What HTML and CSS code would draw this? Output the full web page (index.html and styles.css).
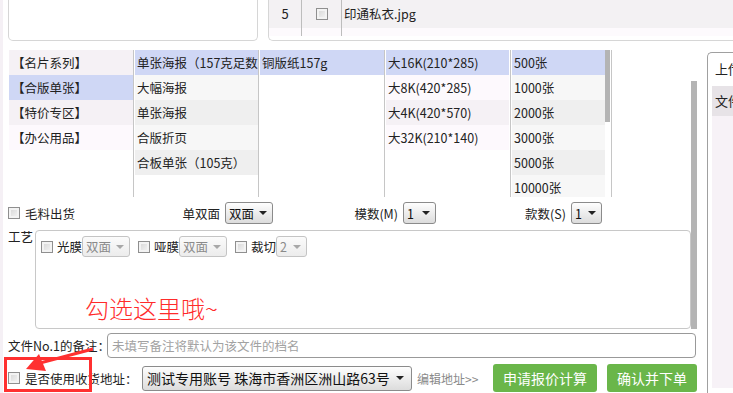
FILE: index.html
```html
<!DOCTYPE html>
<html lang="zh-CN">
<head>
<meta charset="utf-8">
<title>在线下单</title>
<link rel="stylesheet" href="styles.css">
</head>
<body>
<div class="page">
  <div class="top">
    <div class="top-left"></div>
    <div class="top-right">
      <div class="file-row">
        <div class="c-no">5</div>
        <div class="c-chk"><input type="checkbox" class="cb"></div>
        <div class="c-name">印通私衣.jpg</div>
      </div>
      <div class="file-row file-row-empty">
        <div class="c-no"></div>
        <div class="c-chk"></div>
        <div class="c-name"></div>
      </div>
    </div>
  </div>

  <div class="content">
    <div class="main">
      <div class="upper">
        <div class="upper-inner">
          <div class="lists">
            <ul class="list l1">
              <li class="p2">【名片系列】</li>
              <li class="on">【合版单张】</li>
              <li class="p2">【特价专区】</li>
              <li class="p1">【办公用品】</li>
            </ul>
            <ul class="list l2">
              <li class="on">单张海报（157克足数）</li>
              <li class="g1">大幅海报</li>
              <li class="g2">单张海报</li>
              <li class="g1">合版折页</li>
              <li class="g2">合板单张（105克）</li>
            </ul>
            <ul class="list l3">
              <li class="on">铜版纸157g</li>
            </ul>
            <ul class="list l4">
              <li class="on">大16K(210*285)</li>
              <li class="p1">大8K(420*285)</li>
              <li class="p2">大4K(420*570)</li>
              <li class="p1">大32K(210*140)</li>
            </ul>
            <div class="list l5">
              <ul class="qty">
                <li class="on">500张</li>
                <li class="g1">1000张</li>
                <li class="g2">2000张</li>
                <li class="g1">3000张</li>
                <li class="g2">5000张</li>
                <li class="g1">10000张</li>
              </ul>
              <div class="mini-thumb"></div>
            </div>
          </div>

          <div class="opts">
            <label class="opt opt-raw"><input type="checkbox" class="cb">毛料出货</label>
            <div class="opt opt-side">单双面 <span class="sel w48"><span class="val">双面</span><span class="caret"></span></span></div>
            <div class="opt opt-m">模数(M) <span class="sel w33"><span class="val">1</span><span class="caret"></span></span></div>
            <div class="opt opt-s">款数(S) <span class="sel w31"><span class="val">1</span><span class="caret"></span></span></div>
          </div>

          <div class="craft">
            <div class="craft-label">工艺</div>
            <div class="craft-box">
              <div class="craft-row">
                <label class="craft-item"><input type="checkbox" class="cb">光膜</label>
                <span class="sel dis w48"><span class="val">双面</span><span class="caret"></span></span>
                <label class="craft-item"><input type="checkbox" class="cb">哑膜</label>
                <span class="sel dis w48"><span class="val">双面</span><span class="caret"></span></span>
                <label class="craft-item"><input type="checkbox" class="cb">裁切</label>
                <span class="sel dis w31"><span class="val">2</span><span class="caret"></span></span>
              </div>
              <div class="note">勾选这里哦~</div>
            </div>
          </div>
        </div>
        <div class="vscroll"><div class="vthumb"></div></div>
      </div>

      <div class="remark">
        <span class="remark-label">文件No.1的备注：</span>
        <input class="remark-input" type="text" placeholder="未填写备注将默认为该文件的档名">
      </div>

      <div class="addr">
        <label class="addr-label"><input type="checkbox" class="cb">是否使用收货地址：</label>
        <span class="sel big"><span class="val">测试专用账号 珠海市香洲区洲山路63号</span><span class="caret"></span></span>
        <a class="edit">编辑地址&gt;&gt;</a>
        <button class="btn btn-quote">申请报价计算</button>
        <button class="btn btn-order">确认并下单</button>
        <div class="hint-box"></div>
        <svg class="hint-arrow" width="110" height="60" viewBox="0 0 110 60">
          <line x1="93" y1="15" x2="40" y2="29" stroke="#ff3030" stroke-width="3"/>
          <polygon points="26,35 39,20 46,37" fill="#ff3030"/>
        </svg>
      </div>
    </div>

    <aside class="side">
      <div class="side-head">上传文件列表</div>
      <div class="side-row">文件名称</div>
      <div class="side-body"></div>
    </aside>
  </div>
</div>
</body>
</html>
```

FILE: styles.css
```css
* { box-sizing: border-box; }
html, body { margin: 0; padding: 0; }
body {
  width: 733px;
  height: 393px;
  overflow: hidden;
  background: #fff;
  font-family: "Noto Sans CJK SC", "Liberation Sans", sans-serif;
  font-size: 12.5px;
  color: #222;
}
.page {
  border-left: 3px solid #f5f0f5;
  padding-left: 5px;
  height: 393px;
}

/* top fragments */
.top { display: flex; height: 41px; }
.top-left {
  width: 250px;
  flex: none;
  height: 41px;
  border: 1px solid #d6d6d6;
  border-top: 0;
  border-radius: 0 0 5px 5px;
}
.top-right {
  margin-left: 10px;
  margin-right: -30px;
  flex: 1;
  height: 41px;
  border: 1px solid #d6d6d6;
  border-top: 0;
  border-right: 0;
  border-radius: 0 0 0 5px;
}
.file-row { display: flex; height: 28px; background: #f3f1f3; }
.file-row-empty { height: 8px; background: #fdfafd; }
.c-no {
  width: 33px;
  border-right: 1px solid #bdbdbd;
  text-align: center;
  line-height: 28px;
  font-size: 13px;
}
.c-chk {
  width: 40px;
  border-right: 1px solid #bdbdbd;
  display: flex;
  align-items: center;
  justify-content: center;
}
.c-name { padding-left: 2px; line-height: 28px; font-size: 12.5px; }

/* checkbox */
.cb {
  appearance: none;
  -webkit-appearance: none;
  margin: 0;
  width: 12px;
  height: 12px;
  border: 1px solid #8f8f8f;
  background: linear-gradient(135deg, #d4d4d4, #f7f7f7);
  box-shadow: inset 0 0 0 2px #f3f3f3;
  flex: none;
}

/* content */
.content { display: flex; margin-top: 9px; }
.main { width: 689px; flex: none; position: relative; }
.side {
  flex: none;
  margin-left: 10px;
  margin-top: 2px;
  width: 260px;
  border: 1px solid #a0a0a0;
  border-right: 0;
  border-bottom: 0;
  border-radius: 5px 0 0 0;
  height: 345px;
  font-size: 13px;
  white-space: nowrap;
}
.side-head { height: 33px; line-height: 32px; padding-left: 7px; }
.side-row {
  margin-left: 4px;
  height: 30px;
  line-height: 30px;
  padding-left: 3px;
  background: #e7e3e7;
}
.side-body { margin-left: 4px; height: 272px; background: #f7f2f7; }

.upper { display: flex; }
.upper-inner { width: 683px; }
.vscroll { width: 6px; }
.vthumb { margin-top: 31px; height: 248px; background: #b4b4b4; }

/* lists */
.lists { display: flex; height: 147px; }
.list {
  list-style: none;
  margin: 0;
  padding: 0 0 0 1px;
  border-right: 1px solid #c6c6c6;
  height: 147px;
  overflow: hidden;
  flex: none;
}
.list li, .qty li {
  height: 25px;
  line-height: 25px;
  padding-left: 3px;
  white-space: nowrap;
  overflow: hidden;
}
.l1 { width: 126px; }
.l2 { width: 125px; }
.l3 { width: 126px; }
.l4 { width: 126px; padding-right: 1px; }
.l5 { width: 101px; display: flex; padding-right: 1px; }
.l5 .qty { list-style: none; margin: 0; padding: 0; flex: 1; }
.mini-thumb { width: 5px; height: 72px; background: #b4b4b4; }
.l2 li, .l3 li, .l4 li, .qty li { padding-left: 2px; }
.on { background: #cfd7f5; }
.g1 { background: #f7f7f7; }
.g2 { background: #efefef; }
.p1 { background: #fdf9fd; }
.p2 { background: #f5f1f5; }

/* select widget */
.sel {
  display: inline-flex;
  align-items: center;
  height: 22px;
  border: 1px solid #8b8b8b;
  border-radius: 3px;
  background: linear-gradient(#fefefe, #dcdcdc);
  padding: 0 5px 0 3px;
  font-size: 12.5px;
  color: #111;
  flex: none;
}
.sel .val { flex: 1; white-space: nowrap; }
.caret {
  width: 0;
  height: 0;
  border-left: 4px solid transparent;
  border-right: 4px solid transparent;
  border-top: 4px solid #222;
}
.sel.dis {
  height: 21px;
  border-color: #c4c4c4;
  background: linear-gradient(#fbfbfb, #ececec);
  color: #8a8a8a;
}
.sel.dis .caret { border-top-color: #a8a8a8; }
.w48 { width: 48px; }
.w33 { width: 33px; }
.w31 { width: 31px; }

/* options */
.opts { display: flex; align-items: center; height: 26px; margin-top: 3px; }
.opt { display: flex; align-items: center; justify-content: flex-end; gap: 5px; flex: none; }
.opt-raw { width: 130px; justify-content: flex-start; }
.opt-side { width: 135px; }
.opt-m { width: 163px; }
.opt-s { width: 166px; }

/* craft */
.craft { display: flex; margin-top: 4px; height: 99px; }
.craft-label { width: 27px; flex: none; line-height: 14px; }
.craft-box {
  flex: 1;
  position: relative;
  border: 1px solid #c8c8c8;
  border-radius: 4px;
  padding: 5px;
}
.craft-row { display: flex; align-items: center; }
.craft-item { display: flex; align-items: center; gap: 4px; margin-left: 8px; }
.craft-item:first-child { margin-left: 0; }
.note {
  position: absolute;
  left: 49px;
  top: 62px;
  font-size: 24px;
  line-height: 30px;
  color: #ff2b2b;
  font-weight: 300;
}

/* remark */
.remark { display: flex; align-items: center; height: 25px; margin-top: 4px; padding-right: 1px; }
.remark-label { width: 99px; flex: none; white-space: nowrap; }
.remark-input {
  flex: 1;
  height: 25px;
  border: 1px solid #999;
  border-radius: 4px;
  padding: 0 4px;
  font-family: inherit;
  font-size: 12.5px;
  outline: none;
}
.remark-input::placeholder { color: #a2a2a2; }

/* address row */
.addr { display: flex; align-items: center; height: 28px; margin-top: 6px; position: relative; }
.addr-label { display: flex; align-items: center; gap: 5px; width: 134px; flex: none; white-space: nowrap; }
.sel.big {
  width: 270px;
  height: 25px;
  font-size: 14px;
  padding: 0 7px 0 4px;
}
.edit { margin-left: 5px; color: #8a8a8a; font-size: 12px; width: 76px; flex: none; }
.btn {
  height: 28px;
  border: 0;
  border-radius: 3px;
  background: #6ab64a;
  color: #fff;
  font-family: inherit;
  font-size: 14px;
  padding: 0;
  flex: none;
}
.btn-quote { width: 104px; }
.btn-order { width: 90px; margin-left: 10px; }
.hint-box {
  position: absolute;
  left: -4px;
  top: -7px;
  width: 88px;
  height: 35px;
  border: 3px solid #ff3030;
}
.hint-arrow { position: absolute; left: -8px; top: -30px; }
```
